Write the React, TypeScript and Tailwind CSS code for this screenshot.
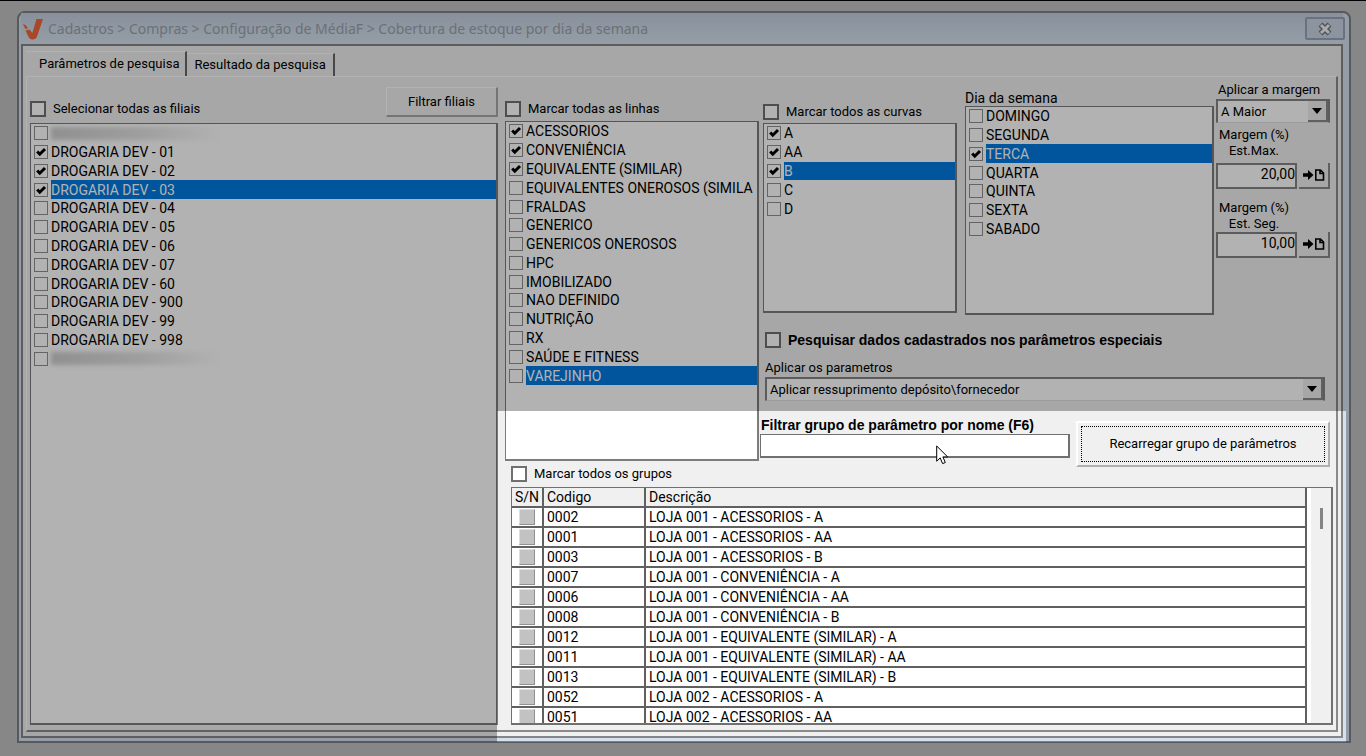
import type { ReactNode } from 'react';

type Item = { label: string; checked?: boolean; selected?: boolean; hidden?: boolean };

const branches: Item[] = [
  { label: '', hidden: true },
  { label: 'DROGARIA DEV - 01', checked: true },
  { label: 'DROGARIA DEV - 02', checked: true },
  { label: 'DROGARIA DEV - 03', checked: true, selected: true },
  { label: 'DROGARIA DEV - 04' },
  { label: 'DROGARIA DEV - 05' },
  { label: 'DROGARIA DEV - 06' },
  { label: 'DROGARIA DEV - 07' },
  { label: 'DROGARIA DEV - 60' },
  { label: 'DROGARIA DEV - 900' },
  { label: 'DROGARIA DEV - 99' },
  { label: 'DROGARIA DEV - 998' },
  { label: '', hidden: true },
];

const lines: Item[] = [
  { label: 'ACESSORIOS', checked: true },
  { label: 'CONVENIÊNCIA', checked: true },
  { label: 'EQUIVALENTE (SIMILAR)', checked: true },
  { label: 'EQUIVALENTES ONEROSOS (SIMILA' },
  { label: 'FRALDAS' },
  { label: 'GENERICO' },
  { label: 'GENERICOS ONEROSOS' },
  { label: 'HPC' },
  { label: 'IMOBILIZADO' },
  { label: 'NAO DEFINIDO' },
  { label: 'NUTRIÇÃO' },
  { label: 'RX' },
  { label: 'SAÚDE E FITNESS' },
  { label: 'VAREJINHO', selected: true },
];

const curves: Item[] = [
  { label: 'A', checked: true },
  { label: 'AA', checked: true },
  { label: 'B', checked: true, selected: true },
  { label: 'C' },
  { label: 'D' },
];

const weekdays: Item[] = [
  { label: 'DOMINGO' },
  { label: 'SEGUNDA' },
  { label: 'TERCA', checked: true, selected: true },
  { label: 'QUARTA' },
  { label: 'QUINTA' },
  { label: 'SEXTA' },
  { label: 'SABADO' },
];

const groups = [
  ['0002', 'LOJA 001 - ACESSORIOS - A'],
  ['0001', 'LOJA 001 - ACESSORIOS - AA'],
  ['0003', 'LOJA 001 - ACESSORIOS - B'],
  ['0007', 'LOJA 001 - CONVENIÊNCIA - A'],
  ['0006', 'LOJA 001 - CONVENIÊNCIA - AA'],
  ['0008', 'LOJA 001 - CONVENIÊNCIA - B'],
  ['0012', 'LOJA 001 - EQUIVALENTE (SIMILAR) - A'],
  ['0011', 'LOJA 001 - EQUIVALENTE (SIMILAR) - AA'],
  ['0013', 'LOJA 001 - EQUIVALENTE (SIMILAR) - B'],
  ['0052', 'LOJA 002 - ACESSORIOS - A'],
  ['0051', 'LOJA 002 - ACESSORIOS - AA'],
];

function ListRow({ item }: { item: Item }) {
  return (
    <label className="flex min-h-0 flex-1 items-center gap-[3px] pl-[3px]">
      <span className="grid shrink-0">
        <input
          type="checkbox"
          defaultChecked={item.checked}
          aria-label={item.label || 'Filial'}
          className="peer col-start-1 row-start-1 size-[14px] appearance-none border border-[#909090] bg-white"
        />
        <svg
          viewBox="0 0 14 14"
          className="pointer-events-none invisible col-start-1 row-start-1 size-[14px] peer-checked:visible"
        >
          <path d="M3.2 6.4 L5.8 9.2 L11 4" fill="none" stroke="#000" strokeWidth="3" />
        </svg>
      </span>
      {item.hidden ? (
        <span className="h-[13px] w-[170px] bg-linear-to-r from-[#cfcfcf] via-[#e2e2e2] to-white blur-[2px]" />
      ) : (
        <span
          className={
            item.selected
              ? 'flex h-full flex-1 items-center overflow-hidden bg-[#007ae0] whitespace-nowrap text-white'
              : 'flex h-full flex-1 items-center overflow-hidden whitespace-nowrap'
          }
        >
          {item.label}
        </span>
      )}
    </label>
  );
}

function CheckList({ items, size, box }: { items: Item[]; size: string; box: string }) {
  return (
    <div className={`overflow-hidden border border-r-2 border-b-2 border-[#7c7c7c] bg-white ${box}`}>
      <div className={`flex flex-col ${size}`}>
        {items.map((item, i) => (
          <ListRow key={i} item={item} />
        ))}
      </div>
    </div>
  );
}

function BigCheck({ children, className = 'text-[13px]' }: { children: ReactNode; className?: string }) {
  return (
    <label className={`flex items-center gap-[7px] ${className}`}>
      <input type="checkbox" className="size-4 shrink-0 appearance-none border-2 border-[#707070] bg-white checked:bg-[#404040]" />
      {children}
    </label>
  );
}

function Dropdown({ id, value }: { id: string; value: string }) {
  return (
    <div className="grid h-6 w-full border-2 border-b border-[#858585] border-b-[#e0e0e0] bg-white">
      <select id={id} className="col-start-1 row-start-1 min-w-0 appearance-none bg-transparent pl-[3px] text-[13px] outline-none">
        <option>{value}</option>
      </select>
      <span className="pointer-events-none col-start-1 row-start-1 flex w-5 items-center justify-center justify-self-end border-r-2 border-b-2 border-[#8a8a8a] bg-[#f0f0f0]">
        <svg viewBox="0 0 10 6" className="h-[6px] w-[10px]">
          <path d="M0 0H10L5 6Z" fill="#000" />
        </svg>
      </span>
    </div>
  );
}

function MarginField({
  id,
  caption,
  value,
  spacing,
}: {
  id: string;
  caption: [string, string];
  value: string;
  spacing: string;
}) {
  return (
    <div className={`flex flex-col ${spacing}`}>
      <label htmlFor={id} className="block w-[76px] text-center text-[13px] leading-4">
        {caption[0]}
        <br />
        {caption[1]}
      </label>
      <div className="flex gap-[2px]">
        <input
          id={id}
          defaultValue={value}
          className="h-[26px] min-w-0 flex-1 border-2 border-[#858585] bg-white pb-1 text-right leading-4 outline-none"
        />
        <button
          type="button"
          aria-label="Aplicar margem"
          className="flex h-[26px] w-[31px] items-center justify-center border-r-2 border-b-2 border-[#8a8a8a] bg-[#f0f0f0]"
        >
          <svg viewBox="0 0 22 12" className="h-3 w-[22px]">
            <path d="M0 4.3H5V1L10.5 6L5 11V7.7H0Z" fill="#000" />
            <path d="M12.8 1H17.5L20.5 4V11H12.8Z M17 1V4.5H20.5" fill="none" stroke="#000" strokeWidth="1.6" />
          </svg>
        </button>
      </div>
    </div>
  );
}

export default function App() {
  return (
    <div className="relative flex h-screen min-h-[756px] min-w-[1100px] flex-col overflow-hidden border-t border-black bg-[#c2c2c2] pt-[10px] pr-[15px] pb-[13px] pl-[17px] font-['Roboto','Liberation_Sans',sans-serif] text-[14px] leading-4 text-black">
      <div className="flex min-h-0 flex-1 flex-col rounded-t-lg border-2 border-[#7c8086] bg-[#d4e1ee] pr-[6px] pb-[3px] pl-[2px]">
        <header className="flex h-[31px] shrink-0 items-center bg-linear-to-b from-[#c3d0de] to-[#d6e3f0]">
          <svg viewBox="0 0 20 22" className="mr-[5px] ml-[2px] h-[22px] w-5">
            <path d="M13.5 1H20L14 18.5Q13 21.5 9.5 21.5Q6.5 21.5 5.3 18.5L2.5 12.5L6.5 11.5L9.3 15Z" fill="#f2683c" />
            <path d="M0 6L3 7.2L5 10.5L2.2 10.8Z" fill="#f2683c" />
          </svg>
          <h1 className="flex-1 font-['Noto_Sans',sans-serif] text-[14px] text-[#9aa2ac]">
            Cadastros &gt; Compras &gt; Configuração de MédiaF &gt; Cobertura de estoque por dia da semana
          </h1>
          <button
            type="button"
            aria-label="Fechar"
            className="mr-[-2px] flex h-[23px] w-10 items-center justify-center rounded-xs border-2 border-[#98a3b8] bg-[#c9d5e4]"
          >
            <svg viewBox="0 0 16 14" className="h-[14px] w-4">
              <path d="M3.5 2.5L12.5 11.5M12.5 2.5L3.5 11.5" stroke="#6e737c" strokeWidth="5.5" />
              <path d="M4 3L12 11M12 3L4 11" stroke="#f4f4f4" strokeWidth="3" />
            </svg>
          </button>
        </header>

        <main className="flex min-h-0 flex-1 flex-col border-2 border-[#868686] bg-[#f0f0f0] pr-[3px] pb-1 pl-[3px]">
          <nav className="flex h-[30px] shrink-0 items-end pt-[5px] text-[13px]">
            <button type="button" className="h-full border-t border-r-2 border-t-white border-r-[#686868] pr-[6px] pl-[13px]">
              Parâmetros de pesquisa
            </button>
            <button type="button" className="h-[23px] border-t border-r-2 border-t-white border-r-[#686868] pr-[7px] pl-[7px]">
              Resultado da pesquisa
            </button>
          </nav>

          <section className="flex min-h-0 flex-1 gap-[7px] border border-r-2 border-b-2 border-white border-r-[#8a8a8a] border-b-[#8a8a8a] pb-[5px] pl-[3px]">
            <div className="flex w-[468px] shrink-0 flex-col">
              <div className="flex h-[46px] items-start justify-between">
                <BigCheck className="mt-6 text-[13px]">Selecionar todas as filiais</BigCheck>
                <button
                  type="button"
                  className="mt-[10px] h-[30px] w-[112px] border border-r-2 border-b-2 border-white border-r-[#a8a8a8] border-b-[#a8a8a8] text-[13px]"
                >
                  Filtrar filiais
                </button>
              </div>
              <CheckList items={branches} size="h-[244px]" box="min-h-0 flex-1" />
            </div>

            <div className="flex min-w-0 flex-1 flex-col">
              <div className="flex h-[384px] shrink-0">
                <div className="flex w-[254px] shrink-0 flex-col">
                  <div className="h-11">
                    <BigCheck className="pt-6 text-[13px]">Marcar todas as linhas</BigCheck>
                  </div>
                  <CheckList items={lines} size="h-[263px]" box="min-h-0 flex-1" />
                </div>

                <div className="flex min-w-0 flex-1 flex-col pr-[6px] pl-px">
                  <div className="flex h-[254px] shrink-0 pl-[3px]">
                    <div className="mr-2 w-[194px]">
                      <div className="h-[46px]">
                        <BigCheck className="pt-[27px] text-[13px]">Marcar todos as curvas</BigCheck>
                      </div>
                      <CheckList items={curves} size="h-[94px]" box="h-[190px]" />
                    </div>
                    <div className="mr-[2px] flex-1">
                      <div className="h-[29px] pt-[13px]">Dia da semana</div>
                      <CheckList items={weekdays} size="h-[131px]" box="h-[209px]" />
                    </div>
                    <div className="w-[114px] pt-[5px]">
                      <label htmlFor="margem" className="mb-[1px] block pl-[2px] text-[13px]">
                        Aplicar a margem
                      </label>
                      <Dropdown id="margem" value="A Maior" />
                      <div className="mt-1 flex flex-col gap-[11px]">
                        <MarginField id="max" caption={['Margem (%)', 'Est.Max.']} value="20,00" spacing="gap-1" />
                        <MarginField id="seg" caption={['Margem (%)', 'Est. Seg.']} value="10,00" spacing="gap-0" />
                      </div>
                    </div>
                  </div>

                  <div className="flex flex-col pr-[5px] pl-[5px]">
                    <BigCheck className="h-[18px] font-['Liberation_Sans',sans-serif] font-bold">
                      Pesquisar dados cadastrados nos parâmetros especiais
                    </BigCheck>
                    <label htmlFor="params" className="mt-[11px] mb-[1px] text-[13px]">
                      Aplicar os parametros
                    </label>
                    <Dropdown id="params" value="Aplicar ressuprimento depósito\fornecedor" />
                  </div>

                  <div className="mt-4 flex items-start gap-[6px]">
                    <div className="min-w-0 flex-1">
                      <label htmlFor="filtro" className="mb-px block pl-px font-['Liberation_Sans',sans-serif] font-bold">
                        Filtrar grupo de parâmetro por nome (F6)
                      </label>
                      <input id="filtro" className="h-6 w-full border border-r-2 border-b-2 border-[#707070] bg-white px-1 outline-none" />
                    </div>
                    <button
                      type="button"
                      className="mt-1 h-[46px] w-[254px] shrink-0 border-2 border-white border-r-[#b0b0b0] border-b-[#b0b0b0] bg-[#f0f0f0] p-[3px] text-[13px]"
                    >
                      <span className="flex h-full items-center justify-center border border-dotted border-black">
                        Recarregar grupo de parâmetros
                      </span>
                    </button>
                  </div>
                </div>
              </div>

              <div className="flex min-h-0 flex-1 flex-col pr-[3px] pl-[6px]">
                <BigCheck className="h-[26px] shrink-0 text-[13px]">Marcar todos os grupos</BigCheck>
                <div className="flex min-h-0 flex-1 overflow-hidden border border-r-2 border-b-2 border-[#707070]">
                  <table className="flex-1 table-fixed border-separate border-spacing-0 self-start bg-white text-left">
                    <colgroup>
                      <col className="w-8" />
                      <col className="w-[102px]" />
                      <col />
                    </colgroup>
                    <thead>
                      <tr className="h-5 bg-[#f0f0f0]">
                        <th className="border-r-2 border-b-2 border-[#606060] p-0 text-center font-normal">S/N</th>
                        <th className="border-r-2 border-b-2 border-[#606060] p-0 pl-[3px] font-normal">Codigo</th>
                        <th className="border-r-2 border-b-2 border-[#606060] p-0 pl-[3px] font-normal">Descrição</th>
                      </tr>
                    </thead>
                    <tbody>
                      {groups.map(([code, name]) => (
                        <tr key={code} className="h-5">
                          <td className="border-r-2 border-b-2 border-[#606060] p-0">
                            <input
                              type="checkbox"
                              aria-label={name}
                              className="mx-auto block size-4 appearance-none border border-[#dedede] border-r-[#909090] border-b-[#909090] bg-[#c2c2c2] checked:bg-[#606060]"
                            />
                          </td>
                          <td className="border-r-2 border-b-2 border-[#606060] p-0 pl-[3px]">{code}</td>
                          <td className="border-r-2 border-b-2 border-[#606060] p-0 pl-[3px]">{name}</td>
                        </tr>
                      ))}
                    </tbody>
                  </table>
                  <div className="flex w-6 shrink-0 justify-center border-l-4 border-white bg-[#f0f0f0] pt-5">
                    <div className="h-[21px] w-[3px] bg-[#858585]" />
                  </div>
                </div>
              </div>
            </div>
          </section>
        </main>
      </div>

      <div className="pointer-events-none absolute top-[410px] right-[20px] bottom-[14px] left-[497px] shadow-[0_0_0_3000px_rgba(0,0,0,0.3)]" />
      <svg viewBox="0 0 13 20" className="pointer-events-none absolute top-[444px] left-[936px] h-5 w-[13px]">
        <path d="M.7 1V16.2L4.2 12.9L6.6 18.6L9.3 17.5L6.9 11.9H11.7Z" fill="#fff" stroke="#000" strokeWidth="1" />
      </svg>
    </div>
  );
}
